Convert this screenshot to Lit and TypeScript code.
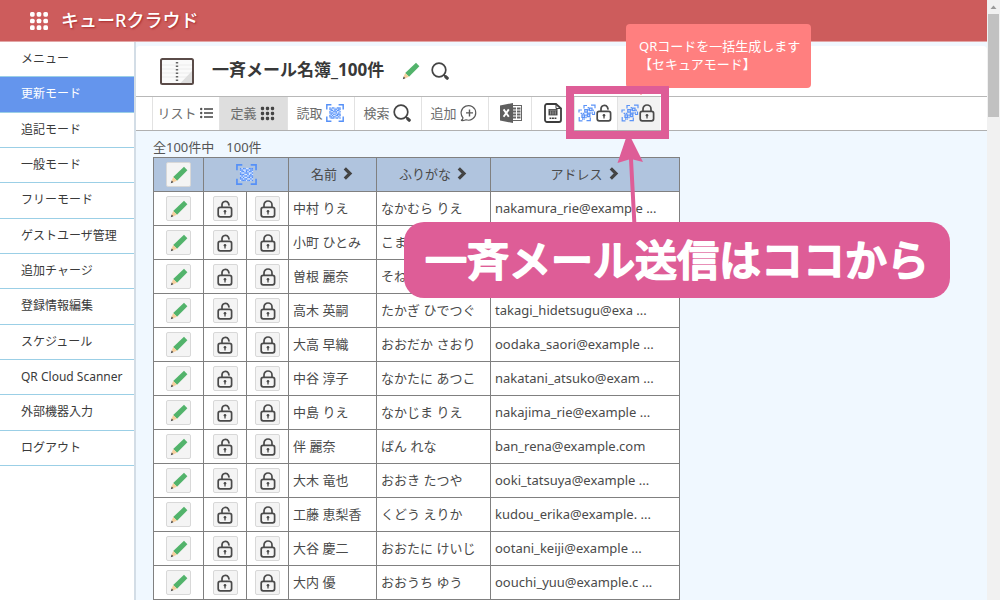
import { LitElement, html, svg, css } from "lit";
import { customElement } from "lit/decorators.js";

const MENU = [
  "メニュー", "更新モード", "追記モード", "一般モード", "フリーモード", "ゲストユーザ管理",
  "追加チャージ", "登録情報編集", "スケジュール", "QR Cloud Scanner", "外部機器入力", "ログアウト",
];

const ROWS: [string, string, string][] = [
  ["中村 りえ", "なかむら りえ", "nakamura_rie@example ..."],
  ["小町 ひとみ", "こまち ひとみ", "komachi_hitomi@exam ..."],
  ["曽根 麗奈", "そね れな", "sone_rena@example.com"],
  ["高木 英嗣", "たかぎ ひでつぐ", "takagi_hidetsugu@exa ..."],
  ["大高 早織", "おおだか さおり", "oodaka_saori@example ..."],
  ["中谷 淳子", "なかたに あつこ", "nakatani_atsuko@exam ..."],
  ["中島 りえ", "なかじま りえ", "nakajima_rie@example ..."],
  ["伴 麗奈", "ばん れな", "ban_rena@example.com"],
  ["大木 竜也", "おおき たつや", "ooki_tatsuya@example ..."],
  ["工藤 恵梨香", "くどう えりか", "kudou_erika@example. ..."],
  ["大谷 慶二", "おおたに けいじ", "ootani_keiji@example ..."],
  ["大内 優", "おおうち ゆう", "oouchi_yuu@example.c ..."],
];

const grid9 = (size: number, fill: string, r: number) => html`
  <svg width=${size} height=${size} viewBox="0 0 18 18" fill=${fill} aria-hidden="true">
    ${[3, 9, 15].map((y) => [3, 9, 15].map((x) => svg`<rect x=${x - r} y=${y - r} width=${2 * r} height=${2 * r} rx="1.4" />`))}
  </svg>`;

const pencil = html`
  <svg width="18" height="18" viewBox="0 0 18 18" aria-hidden="true">
    <path d="M14 .8 17.400 4.200 7 14.800 3.200 11Z" fill="#52b36b" />
    <path d="M3.200 11 7 14.800 2.600 16.600 1.400 15.400Z" fill="#f6cf9d" />
    <path d="M1.700 14.600 3.400 16.300.8 17.200Z" fill="#444" />
  </svg>`;

const lock = (open: boolean) => html`
  <svg width="16" height="18" viewBox="0 0 16 18" fill="none" stroke="#4a4a4a" stroke-width="1.7" aria-hidden="true">
    <rect x="1.2" y="7.4" width="13.4" height="9.4" rx="2" />
    ${open
      ? svg`<path d="M5 7.2V4.600a3.400 3.400 0 0 1 6.400-1.400l.6 1.800" stroke-linecap="round" />`
      : svg`<path d="M4 7.2V5a4 4 0 0 1 8 0v2.2" />`}
    <circle cx="8" cy="11.2" r="1.3" fill="#4a4a4a" stroke="none" />
    <path d="M8 11v3.4" stroke-width="1.3" />
  </svg>`;

const QR = [
  "X.XX..XXX",
  "XX..XX.XX",
  ".XX.X.XX.",
  "X..XXX..X",
  "XXX..X.X.",
  ".X.XX.XXX",
  "X.X..XX.X",
  "XX.XX..X.",
  ".XXX.XX.X",
];
const qr = (size: number) => html`
  <svg width=${size} height=${size} viewBox="0 0 20 20" fill="#5590f8" aria-hidden="true">
    <path d="M.9 6V.9H6M14 .9h5.1V6M19.1 14v5.1H14M6 19.1H.9V14" fill="none" stroke="#5590f8" stroke-width="1.6" />
    <rect x="3.7" y="3.7" width="12.6" height="12.6" fill="#d9e7ff" />
    ${QR.map((row, y) => [...row].map((c, x) => (c === "X" ? svg`<rect x=${3.7 + x * 1.4} y=${3.7 + y * 1.4} width="1.4" height="1.4" />` : null)))}
  </svg>`;

const qrTilted = html`
  <svg width="18" height="18" viewBox="0 0 18 18" fill="none" stroke="#5b93f7" aria-hidden="true">
    <path d="M6 4.500V1.500h3M13 1.200h4v3M1 8.500v-2.500h3M16.500 7.500v3h-2.500M1.200 13v3.800h3.300M8.500 16.600h3.800v-3" stroke-width="1.200" />
    <path d="M6.800 5.600h2.500v2.500H6.800zM11.500 4.200h2.500v2.500h-2.500zM4 10.800h2.500v2.500H4zM9.300 10h2.500v2.500H9.300z" stroke-width="1.300" />
    <path d="M10.300 3v3.500M9 9h6M2.600 9.300h4.500M8 10.500v4.500M15.200 5.500v2.500M4 15h3" stroke-width="1.300" stroke-dasharray="1.600 .6" />
  </svg>`;

const search = html`
  <svg width="18" height="18" viewBox="0 0 18 18" fill="none" stroke="#444" aria-hidden="true">
    <circle cx="8" cy="8" r="6.8" stroke-width="1.7" />
    <path d="m12.600 12.600 1.600 1.600" stroke-width="1.6" />
    <path d="m14.800 14.800 1.400 1.400" stroke-width="3.2" stroke-linecap="round" />
  </svg>`;

const list = html`
  <svg width="13" height="12" viewBox="0 0 13 12" fill="#505050" aria-hidden="true">
    ${[1, 5, 9].map((y) => svg`<circle cx="1.2" cy=${y + 1} r="1.2" /><rect x="4" y=${y + 0.2} width="9" height="1.600" />`)}
  </svg>`;

const addBubble = html`
  <svg width="18" height="18" viewBox="0 0 18 18" fill="none" stroke="#5a5a5a" stroke-width="1.2" aria-hidden="true">
    <path d="M1 16.400c1.500-.4 2-1.200 2-2.600A7.300 7.300 0 1 1 6 15.800c-1.200.7-3 .9-5 .6Z" />
    <path d="M9.500 5.400v7M6 8.900h7" stroke-width="1.4" />
  </svg>`;

const excel = html`
  <svg width="22" height="20" viewBox="0 0 22 20" aria-hidden="true">
    <rect x="12" y="2.500" width="9.500" height="15" fill="#fff" stroke="#666" />
    <path d="M13 5.500h3M17 5.500h3.500M13 8.500h3M17 8.500h3.500M13 11.500h3M17 11.500h3.500M13 14.500h3M17 14.500h3.500" stroke="#666" stroke-width="2" />
    <path d="M0 2.400 13 0v20L0 17.600Z" fill="#5f5f5f" />
    <path d="m3.600 6.400 5.200 7.400M8.800 6.400l-5.200 7.400" stroke="#fff" stroke-width="1.900" />
  </svg>`;

const csv = html`
  <svg width="18" height="20" viewBox="0 0 18 20" fill="none" stroke="#3c3c3c" aria-hidden="true">
    <path d="M3 1h9l5 4.500V17a2 2 0 0 1-2 2H3a2 2 0 0 1-2-2V3a2 2 0 0 1 2-2Z" stroke-width="1.800" />
    <path d="M12 1v4.500h5" stroke-width="1" />
    <rect x="4.500" y="6" width="9" height="6.400" fill="#444" stroke="none" />
    <path d="M5.500 7.200h7M6.500 8.200v3.400M8.200 8.200v3.400M9.900 8.200v3.400M11.600 8.200v3.400" stroke="#ddd" stroke-width=".5" />
    <path d="M5.500 15.200h7" stroke-width="1.600" stroke-dasharray="1.900 .6" />
  </svg>`;

const book = html`
  <svg width="34" height="27" viewBox="0 0 34 27" aria-hidden="true">
    <rect x="1" y="1" width="32" height="25" rx="1.500" fill="#fafafa" stroke="#5a4b48" stroke-width="2" />
    <path d="M2 7h30M2 11h30M2 15h30M2 19h30" stroke="#ececec" />
    <path d="M32 13v12H20.500Z" fill="#dedede" />
    <path d="M17 4v20" stroke="#666" stroke-width="2.400" stroke-dasharray="1.600 1.900" />
  </svg>`;

const chevron = html`
  <svg width="10" height="13" viewBox="0 0 10 13" fill="none" stroke="#444" stroke-width="3.200" aria-hidden="true">
    <path d="m1.800 1.300 5.200 5.200-5.200 5.200" />
  </svg>`;

@customElement("app-root")
export class AppRoot extends LitElement {
  static styles = css`
    :host {
      display: block;
      position: relative;
      height: 100vh;
      overflow: hidden;
      background: #f0f8ff;
      color: #4a4a4a;
      font: 13px/18px "Noto Sans", "Noto Sans CJK JP", sans-serif;
    }
    * { box-sizing: border-box; }
    svg { display: block; flex: none; }
    button { font: inherit; color: inherit; background: none; border: 0; padding: 0; margin: 0; }
    .frame { display: grid; grid-template-columns: 1fr 13px; height: 100%; }
    .page { display: flex; flex-direction: column; min-width: 0; overflow: hidden; }
    .bar {
      flex: none; display: flex; align-items: center; gap: 12px; height: 42px; padding-left: 29px;
      background: #cd5c5c; border-bottom: 1px solid #e2a5a5; color: #fff;
    }
    .brand { margin: 0; padding-bottom: 2px; font-size: 18px; line-height: 26px; font-weight: 500; text-shadow: 1px 1px 2px #8008; }
    .body { flex: 1; display: flex; min-height: 0; }
    .side { flex: none; width: 136px; background: #fff; border-right: 2px solid #d3dde6; }
    .menu { display: flex; flex-direction: column; height: 424px; margin: 0; padding: 0; list-style: none; }
    .item { flex: 1; display: flex; border-bottom: 1px solid #9bcfe6; }
    .link { flex: 1; display: flex; align-items: center; padding-left: 21px; color: #3a3a3a; font-size: 12px; text-decoration: none; white-space: nowrap; }
    .link.on { background: #6495ed; color: #fff; }
    .main { flex: 1; min-width: 0; display: flex; flex-direction: column; }
    .head {
      flex: none; display: flex; align-items: center; height: 50px; margin-top: 4px; padding-left: 24px;
      background: #fff; border-radius: 4px 4px 0 0;
    }
    .title { margin: 0 18px; padding-bottom: 2px; color: #383838; font-size: 17px; line-height: 26px; font-weight: 700; }
    .find { margin-left: 11px; }
    .tools {
      flex: none; display: flex; height: 35px; padding-left: 16px; background: #fff;
      border-top: 1px solid #b8b8b8; border-bottom: 1px solid #b0b0b0;
    }
    .tool {
      display: flex; align-items: center; justify-content: center; gap: 3px; width: 67px; padding: 0 2px 1px 0;
      border-left: 1px solid #e2e2e2; color: #6c6c6c; white-space: nowrap;
    }
    .tool.on { width: 68px; background: #dedede; }
    .tool.icon { width: 43px; padding: 0 0 1px; }
    .tool.excel { padding-left: 2px; }
    .tool.pair { width: 43px; gap: 0; }
    .tool.hover { background: #f2f2f2; }
    .content { padding: 7px 17px 0; }
    .count { margin: 0; display: flex; gap: 12px; line-height: 19px; color: #555; }
    .list { border-collapse: collapse; table-layout: fixed; width: 527px; background: #fff; border: 1px solid #808080; }
    .list th, .list td { height: 34px; padding: 0 4px 2px; border: 1px solid #808080; text-align: left; font-weight: 400; white-space: nowrap; }
    .list th { background: #b0c4de; }
    .list .mid { padding: 0; }
    .mid > * { margin: auto; }
    .c1 { width: 50px; } .c2 { width: 43px; } .c3 { width: 42px; } .c4 { width: 88px; } .c5 { width: 114px; }
    .box {
      display: flex; align-items: center; justify-content: center; width: 25px; height: 25px;
      background: #f4f4f4; border: 1px solid #d8d8d8; border-radius: 2px;
    }
    .sort { display: flex; align-items: center; gap: 6px; padding: 0 1px 2px 0; }
    .scroll { display: flex; flex-direction: column; align-items: center; gap: 4px; padding-top: 5px; background: #f1f1f1; }
    .thumb { width: 11px; height: 103px; background: #c1c1c1; }
    .tip {
      position: absolute; left: 626px; top: 24px; width: 185px; height: 64px; padding: 13px;
      background: #ff7f7f; border-radius: 4px; color: #fff; line-height: 18px; white-space: nowrap;
    }
    .tip::after {
      content: ""; position: absolute; left: 8px; top: 64px;
      border: 7px solid transparent; border-top-color: #ff7f7f; border-bottom: 0;
    }
    .mark { position: absolute; left: 566px; top: 86px; width: 103px; height: 53px; border: 8px solid #de5d97; }
    .arrow { position: absolute; left: 616px; top: 134px; }
    .call { position: absolute; left: 404px; top: 222px; width: 546px; height: 76px; border-radius: 20px; background: #de5d97; }
    .words {
      fill: #fff; stroke: #fff; stroke-width: 2px; stroke-linejoin: round; stroke-linecap: round;
      font-size: 42px; font-weight: 500; text-anchor: middle;
    }
  `;

  render() {
    return html`
      <div class="frame">
        <div class="page">
          <header class="bar">
            ${grid9(20, "#fff", 2.1)}
            <h1 class="brand">キューRクラウド</h1>
          </header>
          <div class="body">
            <nav class="side">
              <ul class="menu">
                ${MENU.map((m, i) => html`<li class="item"><a class="link ${i === 1 ? "on" : ""}" href="#">${m}</a></li>`)}
              </ul>
            </nav>
            <main class="main">
              <div class="head">
                ${book}
                <h2 class="title">一斉メール名簿_100件</h2>
                <button aria-label="名称を編集">${pencil}</button>
                <button class="find" aria-label="名簿を検索">${search}</button>
              </div>
              <div class="tools">
                <button class="tool">リスト ${list}</button>
                <button class="tool on">定義 ${grid9(15, "#444", 2)}</button>
                <button class="tool">読取 ${qr(18)}</button>
                <button class="tool">検索 ${search}</button>
                <button class="tool">追加 ${addBubble}</button>
                <button class="tool icon excel" aria-label="Excel">${excel}</button>
                <button class="tool icon" aria-label="CSV">${csv}</button>
                <button class="tool pair" aria-label="QRコード一括生成">${qrTilted}${lock(true)}</button>
                <button class="tool pair hover" aria-label="QRコード一括生成 セキュアモード">${qrTilted}${lock(false)}</button>
              </div>
              <section class="content">
                <p class="count"><span>全100件中</span><span>100件</span></p>
                <table class="list">
                  <colgroup><col class="c1" /><col class="c2" /><col class="c3" /><col class="c4" /><col class="c5" /><col /></colgroup>
                  <thead>
                    <tr>
                      <th class="mid"><button class="box" aria-label="一括編集">${pencil}</button></th>
                      <th class="mid" colspan="2">${qr(21)}</th>
                      ${["名前", "ふりがな", "アドレス"].map((h) => html`<th class="mid"><button class="sort">${h}${chevron}</button></th>`)}
                    </tr>
                  </thead>
                  <tbody>
                    ${ROWS.map(([name, kana, mail]) => html`
                      <tr>
                        <td class="mid"><button class="box" aria-label="編集">${pencil}</button></td>
                        <td class="mid"><button class="box" aria-label="QRコード">${lock(true)}</button></td>
                        <td class="mid"><button class="box" aria-label="セキュアQRコード">${lock(false)}</button></td>
                        <td>${name}</td>
                        <td>${kana}</td>
                        <td>${mail}</td>
                      </tr>`)}
                  </tbody>
                </table>
              </section>
            </main>
          </div>
        </div>
        <div class="scroll" aria-hidden="true">
          <svg width="7" height="5" viewBox="0 0 7 5"><path d="M3.500.5 6.500 4h-6Z" fill="#999" /></svg>
          <div class="thumb"></div>
        </div>
      </div>
      <div class="tip" role="tooltip">QRコードを一括生成します<br />【セキュアモード】</div>
      <div class="mark"></div>
      <svg class="arrow" width="30" height="92" viewBox="0 0 30 92" fill="#de5d97" aria-hidden="true">
        <path d="M10 4Q12.500-1 15 4L27 28 17 25.500 20.500 92h-4L13 25.500 1.500 29Z" />
      </svg>
      <div class="call">
        <svg width="546" height="76"><text class="words" x="273" y="54">一斉メール送信はココから</text></svg>
      </div>
    `;
  }
}
